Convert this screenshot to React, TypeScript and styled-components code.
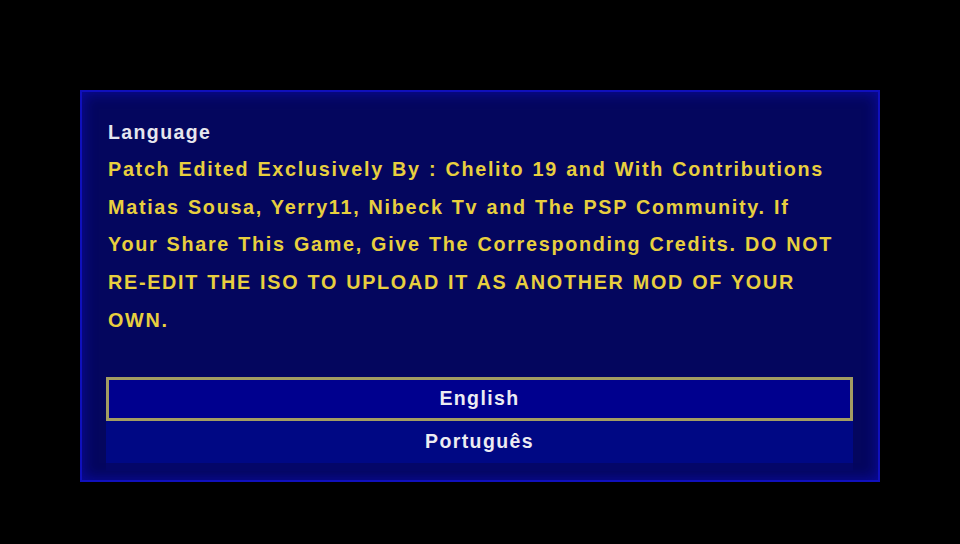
import React from "react";
import styled, { createGlobalStyle } from "styled-components";

const GlobalStyle = createGlobalStyle`
    html, body {
        margin: 0;
        padding: 0;
        background: #000;
        width: 960px;
        height: 544px;
        overflow: hidden;
    }
`;

const Screen = styled.div`
    width: 960px;
    height: 544px;
    display: flex;
    align-items: flex-start;
    justify-content: center;
    padding-top: 90px;
    box-sizing: border-box;
    font-family: "Liberation Sans", Arial, sans-serif;
`;

const Panel = styled.div`
    width: 800px;
    height: 392px;
    box-sizing: border-box;
    background: #04065e;
    box-shadow: inset 0 0 0 2px #1010bc, inset 0 0 14px 3px #0a0a9c;
    padding: 28px 26px 0 28px;
    display: flex;
    flex-direction: column;
`;

const Title = styled.div`
    color: #e6e6ee;
    font-size: 19.5px;
    font-weight: bold;
    letter-spacing: 1.4px;
    line-height: 28px;
`;

const Message = styled.p`
    margin: 5px 0 0 0;
    color: #e8cf3e;
    font-size: 19.8px;
    font-weight: bold;
    letter-spacing: 1.7px;
    line-height: 37.7px;
    word-spacing: 1px;
`;

const Menu = styled.div`
    margin-top: 37px;
    margin-left: -2px;
    width: 747px;
    display: flex;
    flex-direction: column;
    box-shadow: 0 8px 0 #040668;
`;

const Item = styled.div<{ $selected?: boolean }>`
    height: ${(p) => (p.$selected ? "44px" : "42px")};
    box-sizing: border-box;
    display: flex;
    align-items: center;
    justify-content: center;
    color: #ececf2;
    font-size: 19.5px;
    font-weight: bold;
    letter-spacing: 1.4px;
    background: ${(p) => (p.$selected ? "#00008e" : "#000884")};
    border: ${(p) => (p.$selected ? "3px solid #a39d62" : "none")};
`;

export default function App() {
    return (
        <>
            <GlobalStyle />
            <Screen>
                <Panel>
                    <Title>Language</Title>
                    <Message>
                        Patch Edited Exclusively By : Chelito 19 and With Contributions
                        <br />
                        Matias Sousa, Yerry11, Nibeck Tv and The PSP Community. If
                        <br />
                        Your Share This Game, Give The Corresponding Credits. DO NOT
                        <br />
                        RE-EDIT THE ISO TO UPLOAD IT AS ANOTHER MOD OF YOUR
                        <br />
                        OWN.
                    </Message>
                    <Menu>
                        <Item $selected>English</Item>
                        <Item>Português</Item>
                    </Menu>
                </Panel>
            </Screen>
        </>
    );
}
